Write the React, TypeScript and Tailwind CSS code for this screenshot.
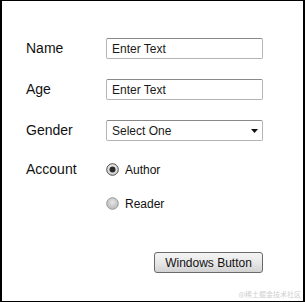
const font = { fontFamily: '"Liberation Sans", Arial, sans-serif' };

function Radio({ checked }: { checked: boolean }) {
  return (
    <svg width="13" height="13" viewBox="0 0 13 13" className="shrink-0">
      <defs>
        <radialGradient id={checked ? 'rc' : 'ru'} cx="0.5" cy="0.4" r="0.6">
          <stop offset="0" stopColor={checked ? '#f4f4f4' : '#e6e6e6'} />
          <stop offset="1" stopColor={checked ? '#cfcfcf' : '#b8b8b8'} />
        </radialGradient>
      </defs>
      <circle cx="6.5" cy="6.5" r="5.8" fill={`url(#${checked ? 'rc' : 'ru'})`} stroke={checked ? '#4a4a4a' : '#9a9a9a'} strokeWidth="1" />
      {checked && <circle cx="6.5" cy="6.5" r="3" fill="#2a2a2a" />}
    </svg>
  );
}

function Row({ label, className, children }: { label?: string; className?: string; children: React.ReactNode }) {
  return (
    <div className={`flex items-center h-[21px] ${className ?? ''}`}>
      <div className="w-[80px] shrink-0 text-[14px] text-[#111]">{label}</div>
      {children}
    </div>
  );
}

export default function App() {
  return (
    <div
      className="relative w-[305px] h-[302px] bg-white border-t border-b border-l-2 border-r-2 border-black pl-[24px] pt-[37px]"
      style={font}
    >
      <Row label="Name">
        <div className="w-[157px] h-[21px] border border-[#b4b4b4] border-t-[#8a8a8a] rounded-[2px] flex items-center pl-[5px] text-[12px] text-[#1a1a1a]">
          Enter Text
        </div>
      </Row>
      <Row label="Age" className="mt-[20px]">
        <div className="w-[157px] h-[21px] border border-[#b4b4b4] border-t-[#8a8a8a] rounded-[2px] flex items-center pl-[5px] text-[12px] text-[#1a1a1a]">
          Enter Text
        </div>
      </Row>
      <Row label="Gender" className="mt-[20px]">
        <div className="w-[157px] h-[21px] border border-[#b4b4b4] border-t-[#8a8a8a] rounded-[2px] flex items-center justify-between pl-[5px] pr-[4px] text-[12px] text-[#1a1a1a]">
          <span>Select One</span>
          <svg width="7" height="4" viewBox="0 0 7 4">
            <path d="M0 0h7L3.5 4z" fill="#111" />
          </svg>
        </div>
      </Row>
      <Row label="Account" className="mt-[18px]">
        <div className="flex items-center gap-[6px] text-[12px] text-[#111]">
          <Radio checked />
          <span>Author</span>
        </div>
      </Row>
      <Row className="mt-[13px]">
        <div className="flex items-center gap-[6px] text-[12px] text-[#111]">
          <Radio checked={false} />
          <span>Reader</span>
        </div>
      </Row>
      <div className="flex mt-[38px] pl-[128px]">
        <button
          type="button"
          className="w-[109px] h-[21px] border border-[#6a6a6a] rounded-[3px] bg-gradient-to-b from-[#f4f4f4] via-[#e8e8e8] to-[#d2d2d2] text-[12px] text-[#111] flex items-center justify-center"
          style={font}
        >
          Windows Button
        </button>
      </div>
      <div
        className="absolute right-[2px] bottom-[3px] text-[7px] text-[#cfcfcf] leading-none"
        style={{ fontFamily: '"Noto Sans CJK SC", sans-serif' }}
      >
        @稀土掘金技术社区
      </div>
    </div>
  );
}
